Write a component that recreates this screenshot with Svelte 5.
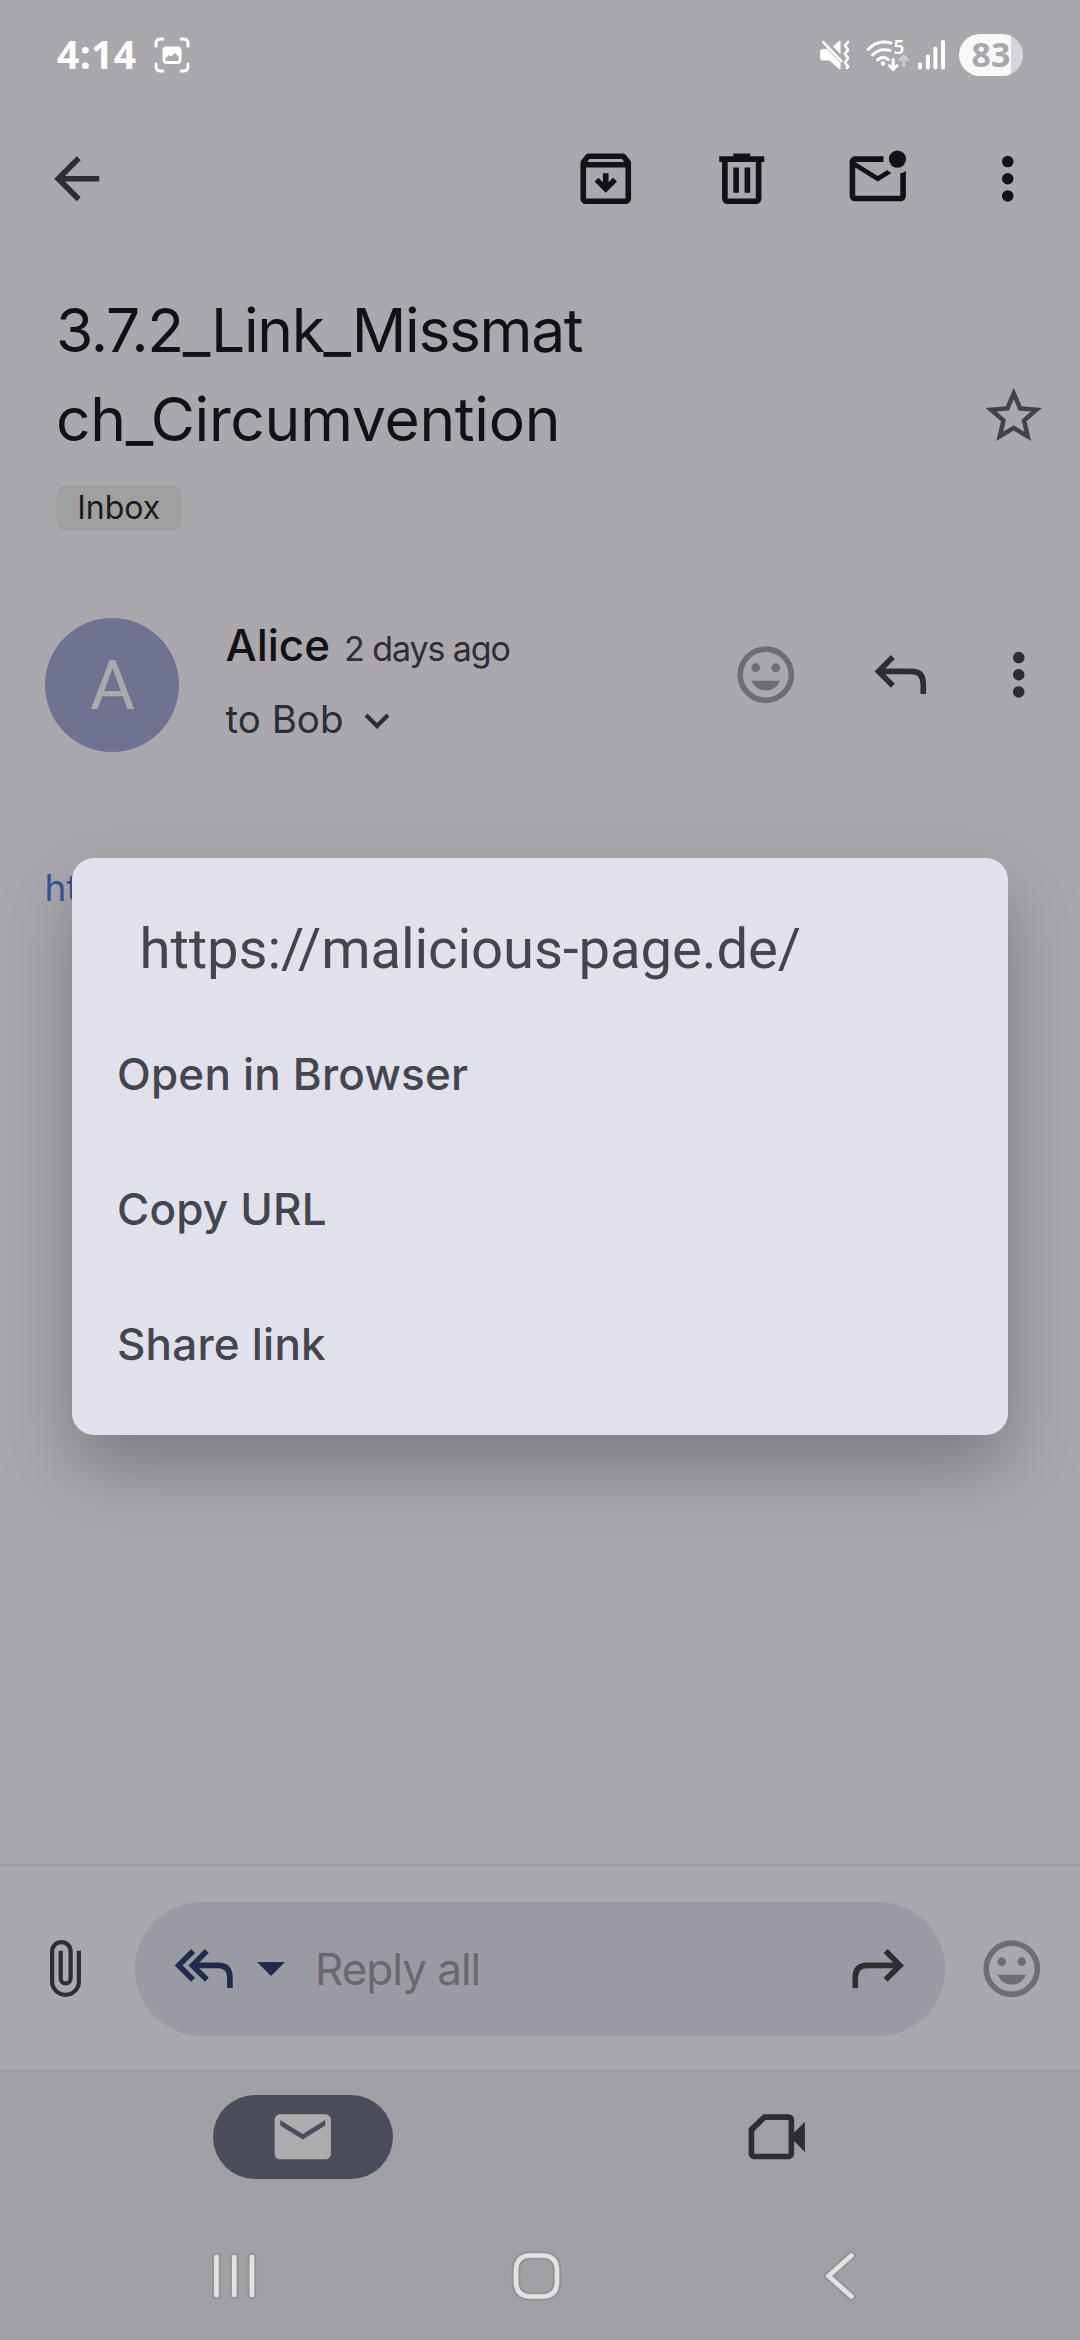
<script>
  const actions = ['Open in Browser', 'Copy URL', 'Share link'];
</script>

{#snippet more()}
  <svg class="icon" viewBox="0 0 24 24">
    <circle cx="12" cy="5.9" r="2.05" /><circle cx="12" cy="12" r="2.05" /><circle cx="12" cy="18.1" r="2.05" />
  </svg>
{/snippet}

{#snippet smile()}
  <svg class="icon smile" viewBox="0 0 24 24">
    <circle class="line" cx="12" cy="12" r="9.1" />
    <circle cx="8.45" cy="9.5" r="1.55" /><circle cx="15.55" cy="9.5" r="1.55" />
    <path d="M7 14.1h10c-.8 2.1-2.7 3.5-5 3.5s-4.200-1.400-5-3.500z" />
  </svg>
{/snippet}

<div class="screen">
  <div class="status">
    <span class="clock">4:14</span>
    <svg class="shot" viewBox="0 0 36 36">
      <path class="wl" d="M2 9V6.500Q2 2 6.500 2H9M27 2h2.500Q34 2 34 6.500V9M34 27v2.500Q34 34 29.500 34H27M9 34H6.500Q2 34 2 29.500V27" />
      <path fill-rule="evenodd" d="M12.500 9.500h11a4 4 0 0 1 4 4v9.500a4 4 0 0 1-4 4h-11a4 4 0 0 1-4-4v-9.500a4 4 0 0 1 4-4zM11.500 24h13v-4.500l-3.500-3.500-4 3.800-2-1.800-3.500 3.500z" />
    </svg>
    <span class="grow"></span>
    <svg class="mute" viewBox="0 0 30 30">
      <path d="M3 9h4l13.500 14v5.500q0 1.500-1.500.6L9.500 20.500H3a3 3 0 0 1-3-3V12a3 3 0 0 1 3-3zM13 6.500l6-5.500q1.500-1 1.500.8v12.500z" />
      <path class="wl" d="M3.200 2.200l18 18.800" />
      <path class="wl" d="M28 2l-3 3.500 3 4.200-3 4.300 3 4.200-3 4.300 3 4.200-1 1.300" />
    </svg>
    <svg class="wifi" viewBox="0 0 44 32">
      <path class="wl" d="M2 10.500Q11.500 .2 25 4M6.500 16Q13.500 8.500 24 11.500M11.500 21q5.500-5 11-.300" />
      <circle cx="17" cy="24.500" r="2.200" />
      <path class="wl" d="M27.200 20.500v9M23.500 26.700l3.700 3.600 3.700-3.600" />
      <path class="wl faint" d="M37.800 26.500v-8M34.200 20.500l3.600-3.500 3.600 3.500" />
      <text x="27.500" y="15">5</text>
    </svg>
    <svg class="signal" viewBox="0 0 28 30">
      <rect x="0" y="22.500" width="4" height="7" rx="2" /><rect x="7.800" y="14.500" width="4" height="15" rx="2" /><rect x="15.400" y="6.800" width="4" height="22.700" rx="2" /><rect x="23" y="0" width="4" height="29.500" rx="2" />
    </svg>
    <span class="battery">83</span>
  </div>

  <header>
    <svg class="icon soft" viewBox="0 0 24 24"><path d="M20 11H7.830l5.590-5.590L12 4l-8 8 8 8 1.410-1.410L7.830 13H20v-2z" /></svg>
    <span class="grow"></span>
    <svg class="icon archive" viewBox="0 0 24 24">
      <path fill-rule="evenodd" d="M20.540 5.230l-1.390-1.680C18.880 3.210 18.470 3 18 3H6c-.47 0-.88.210-1.160.550L3.460 5.230C3.170 5.570 3 6.020 3 6.500V19c0 1.100.9 2 2 2h14c1.100 0 2-.9 2-2V6.500c0-.48-.17-.93-.46-1.270zM6.240 5h11.520l.83 1H5.420l.82-1zM5 19V8h14v11H5zM13 10h-2v3.200l-1.600-1.600L8 13l4 4 4-4-1.400-1.400-1.600 1.600V10z" />
    </svg>
    <svg class="icon trash" viewBox="0 0 24 24">
      <path fill-rule="evenodd" d="M15 3v1h5v2h-1v13c0 1.100-.9 2-2 2H7c-1.100 0-2-.9-2-2V6H4V4h5V3h6zM7 6v13h10V6H7zM9 8h2v9H9V8zM13 8h2v9h-2V8z" />
    </svg>
    <svg class="icon unread" viewBox="0 0 24 24">
      <circle cx="19" cy="5" r="3.050" />
      <path d="M14.100 4H4c-1.100 0-2 .9-2 2v12c0 1.100.9 2 2 2h16c1.100 0 2-.9 2-2V9.200c-.6.400-1.300.7-2 .8v8H4V8l8 5 4.900-3.050c-.6-.3-1.050-.65-1.450-1.100L12 11 4 6h10.100a5 5 0 0 1 0-2z" />
    </svg>
    {@render more()}
  </header>

  <section class="subject">
    <div>
      <h1>3.7.2_Link_Missmat<br /><span>ch_Circumvention</span></h1>
      <span class="chip">Inbox</span>
    </div>
    <svg class="icon star" viewBox="0 0 24 24">
      <path d="M22 9.240l-7.190-.62L12 2 9.190 8.630 2 9.240l5.460 4.730L5.820 21 12 17.270 18.180 21l-1.630-7.030L22 9.240zM12 15.400l-3.760 2.270 1-4.280-3.320-2.880 4.380-.38L12 6.100l1.710 4.040 4.380.38-3.320 2.880 1 4.280L12 15.400z" />
    </svg>
  </section>

  <section class="sender">
    <div class="avatar">A</div>
    <div class="who">
      <div class="from"><b>Alice</b><span>2 days ago</span></div>
      <div class="to"><span>to Bob</span>
        <svg viewBox="0 0 26 16"><path d="M2 2l11 11L24 2" /></svg>
      </div>
    </div>
    <div class="tools">
      {@render smile()}
      <svg class="icon reply" viewBox="0 0 24 24"><path class="line" d="M9.200 5.700L4.100 10.800l5.100 5.100M4.500 10.800H15.700q4.300 0 4.300 4.300V18.800" /></svg>
      {@render more()}
    </div>
  </section>

  <main><a href="#top">https://page.de</a></main>

  <div class="replybar">
    <svg class="clip" viewBox="0 0 31 57"><path d="M28.900 10.700V41.400a13.400 13.400 0 0 1-26.800 0V11.400a9.250 9.250 0 0 1 18.500 0V38.500a4.950 4.950 0 0 1-9.900 0V10.700" /></svg>
    <div class="pill">
      <svg class="icon navy" viewBox="0 0 24 24"><path class="line" d="M8.200 5.700L3.100 10.800l5.100 5.100M13.100 5.700L8 10.800l5.100 5.100M8.400 10.800H17q4.300 0 4.300 4.300V18.800" /></svg>
      <svg class="caret" viewBox="0 0 28 14"><path d="M0 0h28L14 14z" /></svg>
      <span>Reply all</span>
      <i class="grow"></i>
      <svg class="icon" viewBox="0 0 24 24"><path class="line" d="M14.800 5.700l5.100 5.100-5.100 5.100M19.500 10.800H8.300q-4.300 0-4.300 4.300V18.800" /></svg>
    </div>
    {@render smile()}
  </div>

  <nav>
    <div class="tab active">
      <svg class="icon" viewBox="0 0 24 24"><path d="M20 4H4c-1.100 0-1.990.9-1.990 2L2 18c0 1.100.9 2 2 2h16c1.100 0 2-.9 2-2V6c0-1.100-.9-2-2-2zm0 4l-8 5-8-5V6l8 5 8-5v2z" /></svg>
    </div>
    <div class="tab">
      <svg class="icon" viewBox="0 0 24 24"><path fill-rule="evenodd" d="M7.200 4H16.200a2 2 0 0 1 2 2v4.500L22 6.700v10.700L18.200 13.600V18a2 2 0 0 1-2 2H4a2 2 0 0 1-2-2V9zM8 6L4 10v8h12.200V6z" /></svg>
    </div>
  </nav>

  <footer>
    {#each ['M18.500 9v38M36.200 9v38M53.900 9v38', 'M30 7.500h11q15 0 15 15v11q0 15-15 15h-11q-15 0-15-15v-11q0-15 15-15z', 'M47.500 7.500L24.500 28l23 20.500'] as d}
      <svg viewBox="0 0 72 56"><path class="halo" {d} /><path {d} /></svg>
    {/each}
  </footer>

  <div class="dialog">
    <h2>https://malicious-page.de/</h2>
    {#each actions as a}
      <div class="item">{a}</div>
    {/each}
  </div>
</div>

<style>
  :global(body) { margin: 0; background: #aaa8ad; }
  .screen { position: relative; width: 1080px; height: 2340px; overflow: hidden; display: flex; flex-direction: column; background: #aaa8ad; color: #121116; font-family: Inter, Roboto, sans-serif; }
  svg { display: block; flex: none; fill: currentColor; overflow: visible; }
  .icon { width: 67.5px; height: 67.5px; }
  .line { fill: none; stroke: currentColor; stroke-width: 2; }
  .grow { flex: 1; }
  .soft { color: #2d2e32; }
  .smile { color: #6b6f72; }

  .status { height: 111px; box-sizing: border-box; padding: 0 57px 1px; display: flex; align-items: center; color: #fff; }
  .clock { font: 700 39px/54px 'Noto Sans', sans-serif; letter-spacing: .4px; padding-bottom: 2px; }
  .shot { width: 36px; height: 36px; margin-left: 17.500px; }
  .wl { fill: none; stroke: currentColor; stroke-width: 3; stroke-linecap: round; stroke-linejoin: round; }
  .mute { width: 30px; height: 30px; margin-right: 16px; }
  .mute .wl { stroke-width: 2.600; }
  .wifi { width: 44px; height: 32px; margin-right: 8px; }
  .wifi text { font: 600 19px 'Noto Sans', sans-serif; }
  .faint { opacity: .4; }
  .signal { width: 28px; height: 30px; margin-right: 13px; }
  .battery { width: 64px; height: 42px; border-radius: 21px; background: linear-gradient(90deg, #f8f8f8 52px, #d6d6d8 52px); color: #a9a8ac; font: 700 34px/41px 'Noto Sans', sans-serif; text-align: center; }

  header { height: 135px; box-sizing: border-box; padding: 0 39px 0 43px; display: flex; align-items: center; }
  .archive { margin-right: 68.500px; }
  .trash { margin-right: 68.500px; }
  .unread { margin-right: 62.500px; }

  .subject { display: flex; justify-content: space-between; padding: 39.500px 33px 0 56px; }
  h1 { margin: 0 0 21.500px; font-size: 60.500px; line-height: 89px; font-weight: 400; letter-spacing: -1.350px; }
  h1 span { letter-spacing: -.300px; }
  .chip { display: block; width: 125.500px; height: 46px; border-radius: 11px; background: #9fa09f; color: #1b1b1c; font-size: 32px; line-height: 45px; text-align: center; }
  .star { margin-top: 96.500px; color: #424347; }

  .sender { display: flex; padding: 87px 28px 0 45px; height: 134px; }
  .avatar { width: 134px; height: 134px; border-radius: 50%; background: #6f7291; color: #a9aaa9; font: 400 69px/136px Roboto, sans-serif; text-align: center; text-indent: 1px; }
  .who { margin: -3px 0 0 46.500px; flex: 1; }
  .from { display: flex; align-items: baseline; gap: 14px; height: 60px; line-height: 60px; }
  b { font-size: 44px; font-weight: 500; }
  .from span { font-size: 34px; letter-spacing: -1.100px; color: #2d2e32; }
  .to { display: flex; align-items: center; gap: 21px; margin-top: 19px; height: 50px; line-height: 50px; font-size: 38.500px; color: #2d2e32; }
  .to svg { width: 26px; height: 16px; margin-top: 3px; }
  .to path { fill: none; stroke: currentColor; stroke-width: 4.200; }
  .tools { display: flex; margin-top: 23px; color: #2d2e32; }
  .reply { margin: 0 50px 0 68px; }

  main { flex: 1; padding: 111px 44.500px 0; }
  a { color: #3a5596; text-decoration: none; font-size: 37px; line-height: 50px; }

  .replybar { height: 206px; box-sizing: border-box; border-top: 3px solid #9ea0a1; display: flex; align-items: center; padding: 0 34.500px 0 50px; }
  .clip { width: 31px; height: 57px; margin-right: 54px; color: #2d2e32; }
  .clip path { fill: none; stroke: currentColor; stroke-width: 4.200; }
  .pill { width: 810px; height: 134px; border-radius: 67px; box-sizing: border-box; padding: 0 34px 0 35px; margin-right: 33px; background: #9a9aa3; display: flex; align-items: center; color: #2d2e32; }
  .navy, .caret { color: #1f2a4c; }
  .caret { width: 28px; height: 14px; margin: 0 30.500px 0 19px; }
  .pill span { font-size: 44px; letter-spacing: -1px; color: #68696d; }

  nav { height: 109px; padding-top: 25px; background: #a09fa4; display: flex; box-sizing: border-box; gap: 294px; padding-left: 213px; color: #2d2e32; }
  .tab { width: 180px; height: 84px; border-radius: 42px; display: flex; align-items: center; justify-content: center; }
  .active { background: #4b4e5a; color: #acacac; }
  footer { height: 161px; box-sizing: border-box; padding: 69px 204px 0 197.500px; background: #a09fa4; display: flex; justify-content: space-between; }
  footer svg { width: 72px; height: 56px; }
  footer path { fill: none; stroke: #e3e3e4; stroke-width: 4.600; stroke-linecap: round; stroke-linejoin: round; }
  footer .halo { stroke: #949398; stroke-width: 9; }

  .dialog { position: absolute; left: 72px; top: 858px; width: 936px; height: 577px; box-sizing: border-box; border-radius: 22px; background: #e1e1eb; color: #44464f; padding: 54px 45px 0; box-shadow: 0 33px 72px rgba(0, 0, 0, .27); }
  h2 { margin: 0 0 30px 22.500px; font: 400 56.250px/75px Roboto, sans-serif; letter-spacing: -.080px; }
  .item { height: 135px; line-height: 114px; font-size: 44px; font-weight: 500; letter-spacing: .200px; }
</style>
